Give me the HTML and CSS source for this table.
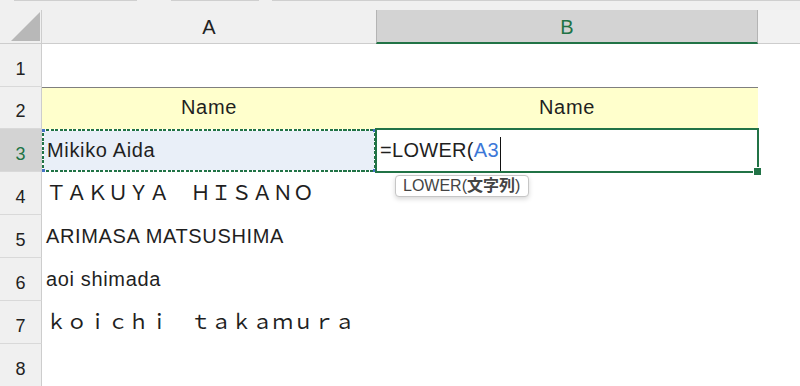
FILE: index.html
```html
<!DOCTYPE html>
<html lang="ja">
<head>
<meta charset="utf-8">
<title>LOWER</title>
<link rel="stylesheet" href="styles.css">
</head>
<body>
<div class="app">
  <div class="strip">
    <span class="seg seg-a"></span>
    <span class="seg seg-b"></span>
    <span class="seg seg-c"></span>
  </div>
  <div class="sheet">
    <div class="corner">
      <svg width="42" height="34" viewBox="0 0 42 34"><polygon points="11,31 40,31 40,2" fill="#b8b8b8"/></svg>
    </div>
    <div class="colhead">A</div>
    <div class="colhead colhead-sel">B</div>
    <div class="colhead colhead-rest"></div>

    <div class="rowhead">1</div>
    <div class="cell"></div>
    <div class="cell"></div>
    <div class="cell"></div>

    <div class="rowhead">2</div>
    <div class="cell cell-title">Name</div>
    <div class="cell cell-title">Name</div>
    <div class="cell"></div>

    <div class="rowhead rowhead-sel">3</div>
    <div class="cell cell-ref">Mikiko Aida</div>
    <div class="cell cell-active"><span class="fx">=LOWER(</span><span class="fx-ref">A3</span><span class="caret"></span>
      <div class="tip">LOWER(<b>文字列</b>)</div>
    </div>
    <div class="cell"></div>

    <div class="rowhead">4</div>
    <div class="cell cell-wide">ＴＡＫＵＹＡ　ＨＩＳＡＮＯ</div>
    <div class="cell"></div>
    <div class="cell"></div>

    <div class="rowhead">5</div>
    <div class="cell">ARIMASA MATSUSHIMA</div>
    <div class="cell"></div>
    <div class="cell"></div>

    <div class="rowhead">6</div>
    <div class="cell">aoi shimada</div>
    <div class="cell"></div>
    <div class="cell"></div>

    <div class="rowhead">7</div>
    <div class="cell cell-wide">ｋｏｉｃｈｉ　ｔａｋａｍｕｒａ</div>
    <div class="cell"></div>
    <div class="cell"></div>

    <div class="rowhead">8</div>
    <div class="cell"></div>
    <div class="cell"></div>
    <div class="cell"></div>
  </div>
</div>
</body>
</html>
```
FILE: styles.css
```css
* { box-sizing: border-box; }
html, body { margin: 0; padding: 0; }
body {
  width: 800px;
  height: 386px;
  overflow: hidden;
  background: #ffffff;
  font-family: "Liberation Sans", "Noto Sans CJK JP", sans-serif;
  color: #1f1f1f;
}
.app { width: 800px; height: 386px; overflow: hidden; }

.strip {
  height: 10px;
  background: #f0f0f0;
  display: flex;
}
.seg { height: 1px; background: #cfcfcf; }
.seg-a { margin-left: 14px; width: 123px; }
.seg-b { margin-left: 34px; width: 88px; }
.seg-c { margin-left: 13px; flex: 1; }

.sheet {
  display: grid;
  grid-template-columns: 42px 334px 382px 42px;
  grid-template-rows: 34px 43px 42px repeat(6, 43px);
}

.corner {
  background: #f0f0f0;
  border-right: 1px solid #cdcdcd;
  border-bottom: 1px solid #cdcdcd;
}
.corner svg { display: block; }

.colhead {
  background: #f0f0f0;
  border-bottom: 1px solid #cdcdcd;
  display: flex;
  align-items: center;
  justify-content: center;
  font-size: 20px;
  line-height: 20px;
  color: #222;
  padding-top: 1px;
}
.colhead-sel {
  background: #d3d3d3;
  border-left: 1px solid #b4b4b4;
  border-right: 1px solid #b4b4b4;
  border-bottom: 2px solid #217346;
  color: #217346;
}
.colhead-rest { background: #f2f2f2; }

.rowhead {
  background: #f0f0f0;
  border-right: 1px solid #cdcdcd;
  border-bottom: 1px solid #d9d9d9;
  display: flex;
  align-items: flex-end;
  justify-content: center;
  font-size: 18px;
  line-height: 18px;
  padding-bottom: 8px;
  color: #222;
}
.rowhead-sel {
  background: #d3d3d3;
  color: #217346;
}

.cell {
  display: flex;
  align-items: flex-end;
  padding: 0 4px 12px 4px;
  font-size: 20px;
  line-height: 20px;
  letter-spacing: 0.65px;
  white-space: nowrap;
  position: relative;
}
.cell-wide { padding-left: 4px; font-size: 20.6px; letter-spacing: 0; }

.cell-title {
  background: #ffffcc;
  border-top: 1px solid #7f7f7f;
  justify-content: center;
}

.cell-ref {
  padding-left: 5px;
  background:
    linear-gradient(#4472c4, #4472c4) left top / 3px 3px no-repeat,
    linear-gradient(#4472c4, #4472c4) right top / 3px 3px no-repeat,
    linear-gradient(#4472c4, #4472c4) left bottom / 3px 3px no-repeat,
    linear-gradient(#4472c4, #4472c4) right bottom / 3px 3px no-repeat,
    repeating-linear-gradient(90deg, #217346 0 3px, #ffffff 3px 4.5px) left top / 100% 2px no-repeat,
    repeating-linear-gradient(90deg, #217346 0 3px, #ffffff 3px 4.5px) left bottom / 100% 2px no-repeat,
    repeating-linear-gradient(180deg, #217346 0 3px, #ffffff 3px 4.5px) left top / 2px 100% no-repeat,
    repeating-linear-gradient(180deg, #217346 0 3px, #ffffff 3px 4.5px) right top / 2px 100% no-repeat,
    #e9eff8;
}

.cell-active {
  outline: 2px solid #217346;
  outline-offset: -1px;
  padding-left: 4px;
  letter-spacing: 0.3px;
  z-index: 2;
}
.cell-active::after {
  content: "";
  position: absolute;
  right: -4px;
  bottom: -4px;
  width: 7px;
  height: 7px;
  background: #217346;
  border: 1px solid #ffffff;
}
.fx { color: #1f1f1f; }
.fx-ref { color: #3c78d8; }
.caret {
  display: inline-block;
  width: 1px;
  height: 34px;
  background: #111;
  margin: -10px 0 -11px 1px;
}

.tip {
  position: absolute;
  left: 19px;
  top: 46px;
  width: 134px;
  height: 22px;
  border: 1px solid #c6c6c6;
  border-radius: 4px;
  background: #ffffff;
  box-shadow: 0 2px 5px rgba(0, 0, 0, 0.16);
  font-size: 16px;
  line-height: 20px;
  letter-spacing: 0;
  color: #444;
  padding-left: 7px;
  white-space: nowrap;
}
.tip b { font-weight: 700; }
```
